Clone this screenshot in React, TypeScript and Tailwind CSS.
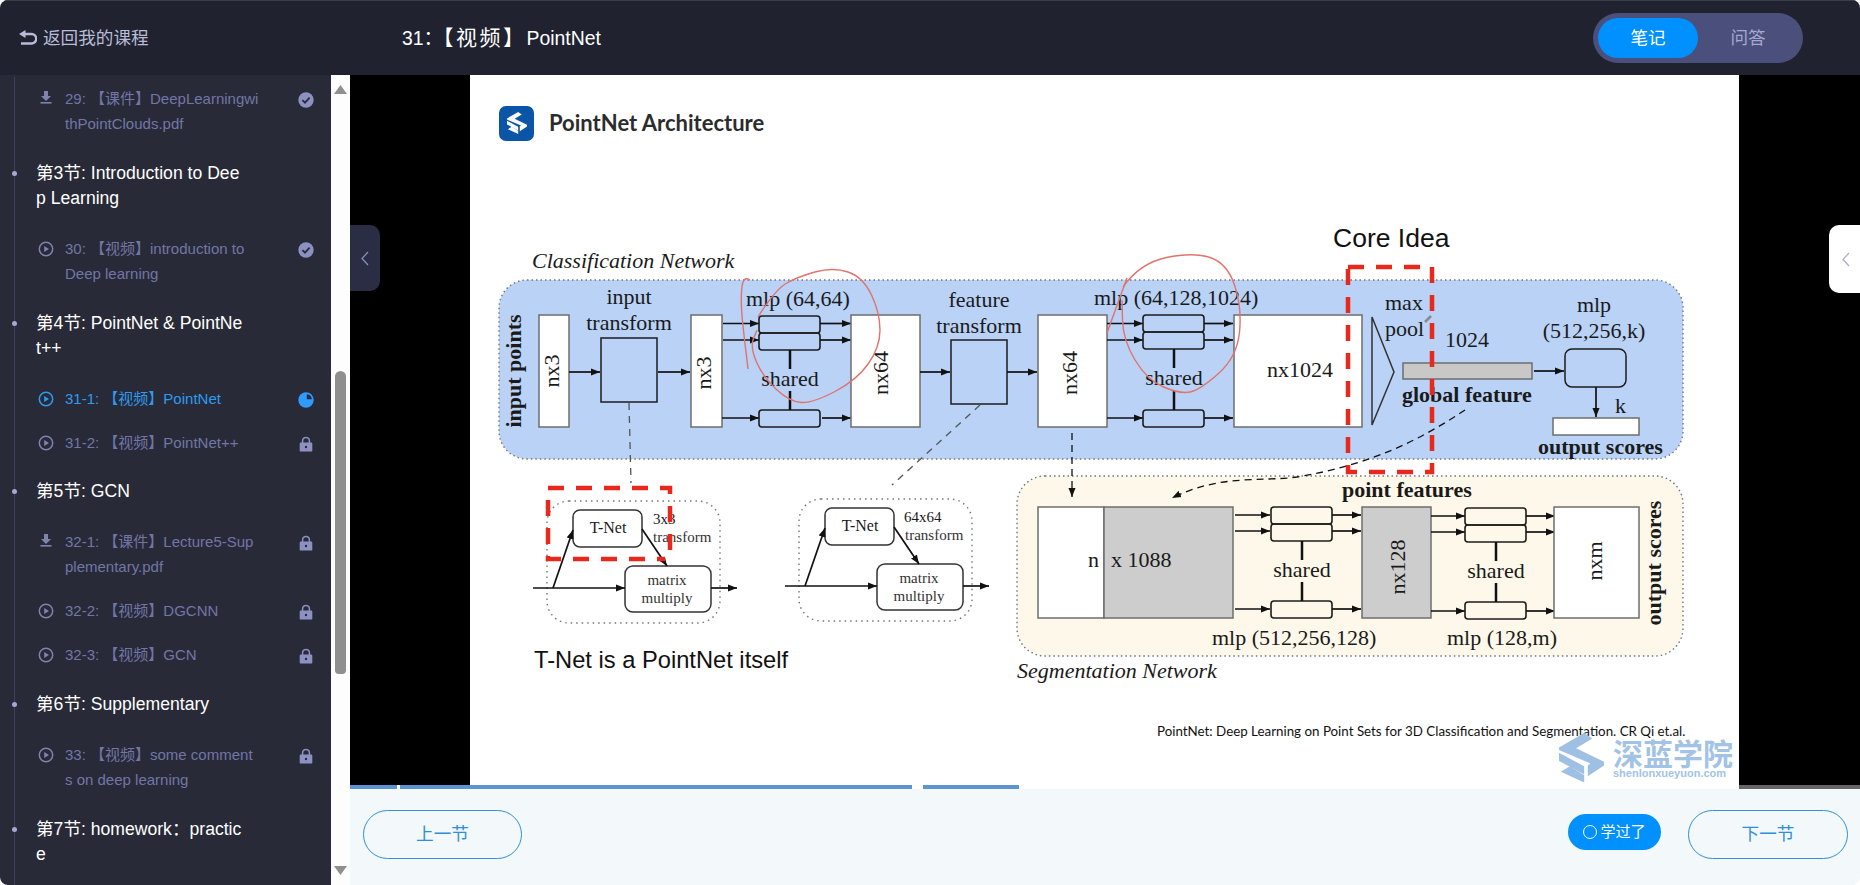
import type { ReactNode } from 'react'

const sans = "[font-family:'Liberation_Sans','Noto_Sans_CJK_SC',sans-serif]"

type Lesson = { kind: 'video' | 'file'; text: string; state: 'done' | 'lock' | 'active' }
type Section = { title?: string; lessons: Lesson[] }

const sections: Section[] = [
  { lessons: [{ kind: 'file', text: '29: 【课件】DeepLearningwithPointClouds.pdf', state: 'done' }] },
  { title: '第3节: Introduction to Deep Learning', lessons: [{ kind: 'video', text: '30: 【视频】introduction to\nDeep learning', state: 'done' }] },
  {
    title: '第4节: PointNet & PointNet++',
    lessons: [
      { kind: 'video', text: '31-1: 【视频】PointNet', state: 'active' },
      { kind: 'video', text: '31-2: 【视频】PointNet++', state: 'lock' },
    ],
  },
  {
    title: '第5节: GCN',
    lessons: [
      { kind: 'file', text: '32-1: 【课件】Lecture5-Supplementary.pdf', state: 'lock' },
      { kind: 'video', text: '32-2: 【视频】DGCNN', state: 'lock' },
      { kind: 'video', text: '32-3: 【视频】GCN', state: 'lock' },
    ],
  },
  { title: '第6节: Supplementary', lessons: [{ kind: 'video', text: '33: 【视频】some comments on deep learning', state: 'lock' }] },
  { title: '第7节: homework：practice', lessons: [] },
]

function KindIcon({ kind, active }: { kind: Lesson['kind']; active: boolean }) {
  const color = active ? '#2f9bef' : '#7f83ad'
  if (kind === 'file') {
    return (
      <svg width="16" height="16" viewBox="0 0 16 16" className="shrink-0 mt-[3px]">
        <path d="M6 2h4v5h3l-5 5-5-5h3z" fill={color} />
        <rect x="2.5" y="13" width="11" height="1.6" fill={color} />
      </svg>
    )
  }
  return (
    <svg width="16" height="16" viewBox="0 0 16 16" className="shrink-0 mt-[5px]">
      <circle cx="8" cy="8" r="6.7" fill="none" stroke={color} strokeWidth="1.5" />
      <path d="M6.2 4.9 11 8l-4.8 3.1z" fill={color} />
    </svg>
  )
}

function StateIcon({ state }: { state: Lesson['state'] }) {
  if (state === 'done') {
    return (
      <svg width="16" height="16" viewBox="0 0 16 16" className="shrink-0 mt-[6px]">
        <circle cx="8" cy="8" r="7.7" fill="#8d91c1" />
        <path d="M4.4 8.2 7 10.7l4.6-5" fill="none" stroke="#282a38" strokeWidth="1.8" />
      </svg>
    )
  }
  if (state === 'active') {
    return (
      <svg width="16" height="16" viewBox="0 0 16 16" className="shrink-0 mt-[6px]">
        <circle cx="8" cy="8" r="7.7" fill="#2f9bff" />
        <path d="M8.8 2.2a5.4 5.4 0 0 1 5 5h-5z" fill="#282a38" />
      </svg>
    )
  }
  return (
    <svg width="16" height="16" viewBox="0 0 16 16" className="shrink-0 mt-[6px]">
      <path d="M4.6 7V4.8a3.4 3.4 0 0 1 6.8 0V7" fill="none" stroke="#8d91c1" strokeWidth="1.5" />
      <rect x="1.7" y="6.6" width="12.6" height="9" rx="1.2" fill="#8d91c1" />
      <circle cx="8" cy="11" r="1.2" fill="#282a38" />
    </svg>
  )
}

function Sidebar() {
  return (
    <div className={`w-[331px] bg-[#282a38] overflow-hidden pt-[2px] ${sans}`}>
      <div className="ml-[14px] border-l border-[#3d4160] min-h-[810px]">
        {sections.map((s, i) => (
          <div key={i}>
            {s.title && (
              <div className="flex items-start pt-[15px] pb-[16px]">
                <span className="-ml-[3px] mt-[10px] w-[5px] h-[5px] rounded-full bg-[#a4a8d8] shrink-0" />
                <p className="ml-[19px] w-[207px] break-all text-[17.6px] leading-[25px] text-white">{s.title}</p>
              </div>
            )}
            {s.lessons.map(l => (
              <div key={l.text} className="flex items-start pt-[9px] pb-[9.85px] pl-[23px]">
                <KindIcon kind={l.kind} active={l.state === 'active'} />
                <p className={`ml-[11px] w-[195px] break-all whitespace-pre-line text-[15px] leading-[25px] ${l.state === 'active' ? 'text-[#2f9bef]' : 'text-[#7276a6]'}`}>{l.text}</p>
                <span className="ml-[38px]"><StateIcon state={l.state} /></span>
              </div>
            ))}
          </div>
        ))}
      </div>
    </div>
  )
}

function Scrollbar() {
  return (
    <div className="w-[19px] bg-[#fdfdfd] flex flex-col items-center">
      <svg width="13" height="10" viewBox="0 0 13 10" className="mt-[10px] shrink-0">
        <path d="M6.5 0 13 9H0z" fill="#8f8f8f" />
      </svg>
      <div className="mt-[276px] w-[11px] h-[303px] rounded-t-[6px] rounded-b-[4px] bg-[#8f8f8f] shrink-0" />
      <svg width="13" height="10" viewBox="0 0 13 10" className="mt-[192px] shrink-0">
        <path d="M0 0h13L6.5 9z" fill="#8f8f8f" />
      </svg>
    </div>
  )
}

const serif = "font-['Liberation_Serif',serif]"

function T(props: { x: number; y: number; size?: number; bold?: boolean; italic?: boolean; anchor?: 'start' | 'middle'; rotate?: boolean; children: ReactNode; className?: string; fill?: string }) {
  const { x, y, size = 22, bold, italic, anchor = 'start', rotate, children, className = serif, fill = '#1a1a1a' } = props
  return (
    <text
      x={x}
      y={y}
      fontSize={size}
      fontWeight={bold ? 700 : 400}
      fontStyle={italic ? 'italic' : 'normal'}
      textAnchor={anchor}
      fill={fill}
      className={className}
      transform={rotate ? `rotate(-90 ${x} ${y})` : undefined}
    >
      {children}
    </text>
  )
}

function Arrow({ x1, y1, x2, y2 }: { x1: number; y1: number; x2: number; y2: number }) {
  return <line x1={x1} y1={y1} x2={x2} y2={y2} stroke="#111" strokeWidth="1.7" markerEnd="url(#tip)" />
}

function smooth(p: number[][]) {
  let d = `M${p[0][0]} ${p[0][1]}`
  for (let i = 1; i < p.length - 1; i++) {
    const mx = (p[i][0] + p[i + 1][0]) / 2
    const my = (p[i][1] + p[i + 1][1]) / 2
    d += ` Q${p[i][0]} ${p[i][1]} ${mx} ${my}`
  }
  const last = p[p.length - 1]
  return `${d} L${last[0]} ${last[1]}`
}

// three stacked mlp boxes with the "shared" label between them
function Mlp({ x, top, bottom }: { x: number; top: number; bottom: number }) {
  const box = { x, width: 61, rx: 3, fill: 'none', stroke: '#1c1c1c', strokeWidth: 1.6 }
  const mid = x + 31
  return (
    <g>
      <rect {...box} y={top} height={17} />
      <rect {...box} y={top + 17} height={17} />
      <rect {...box} y={bottom} height={17} />
      <line x1={mid} y1={top + 34} x2={mid} y2={top + 53} stroke="#111" strokeWidth="2.5" />
      <line x1={mid} y1={bottom - 19} x2={mid} y2={bottom} stroke="#111" strokeWidth="2.5" />
      <T x={mid} y={top + 70} anchor="middle">shared</T>
    </g>
  )
}

function Block({ x, y, w, h, fill = '#fff' }: { x: number; y: number; w: number; h: number; fill?: string }) {
  return <rect x={x} y={y} width={w} height={h} fill={fill} stroke="#6e6e6e" strokeWidth="1.5" />
}

function TNet({ dx, dy, second }: { dx: number; dy: number; second?: boolean }) {
  return (
    <g transform={`translate(${dx} ${dy})`}>
      <rect x="547" y="501" width="173" height="122" rx="22" fill="none" stroke="#777" strokeWidth="1.4" strokeDasharray="1.5 4" />
      <rect x="573" y="510" width="69" height="37" rx="7" fill="#fff" stroke="#333" strokeWidth="1.5" />
      <T x={608} y={533} size={16} anchor="middle">T-Net</T>
      <T x={second ? 652 : 653} y={524} size={15}>{second ? '64x64' : '3x3'}</T>
      <T x={653} y={542} size={15} fill="#333">transform</T>
      <rect x="625" y="566" width="86" height="46" rx="8" fill="#fff" stroke="#333" strokeWidth="1.5" />
      <T x={667} y={585} size={15} anchor="middle" fill="#333">matrix</T>
      <T x={667} y={603} size={15} anchor="middle" fill="#333">multiply</T>
      <Arrow x1={533} y1={588} x2={625} y2={588} />
      <Arrow x1={711} y1={588} x2={737} y2={588} />
      <Arrow x1={553} y1={588} x2={573} y2={530} />
      <Arrow x1={642} y1={529} x2={667} y2={566} />
    </g>
  )
}

function LogoMark({ fill }: { fill: string }) {
  return (
    <g fill={fill}>
      <path d="M0 32 56 0l18 12-36 22 62 30v8L64 96V72l6-4L0 38Z" />
      <path d="M0 44 56 74v18L0 62Z" />
      <path d="M4 86 24 74l32 20v16Z" />
    </g>
  )
}

function Diagram() {
  const red = { fill: 'none', stroke: '#e8281c', strokeWidth: 4.5, strokeDasharray: '16 12' }
  const pen = { fill: 'none', stroke: '#e0736c', strokeWidth: 1.4 }
  return (
    <svg width="1269" height="710" viewBox="470 75 1269 710" className="block">
      <defs>
        <marker id="tip" markerUnits="userSpaceOnUse" markerWidth="10" markerHeight="8" refX="9" refY="4" orient="auto">
          <path d="M0 0.5 9 4 0 7.5z" fill="#111" />
        </marker>
      </defs>

      {/* title */}
      <g transform="translate(499 106)">
        <rect width="35" height="35" rx="7" fill="#0b55a6" />
        <g transform="translate(8 6) scale(0.2)"><LogoMark fill="#fff" /></g>
      </g>
      <T x={549} y={131} size={22} bold className="font-['Lato',sans-serif]" fill="#2c2c2c">PointNet Architecture</T>

      {/* classification */}
      <T x={532} y={268} italic>Classification Network</T>
      <rect x="499" y="280" width="1184" height="179" rx="28" fill="#b9d2f6" stroke="#6f7680" strokeWidth="1.4" strokeDasharray="1.5 3" />
      <T x={521} y={371} bold rotate anchor="middle">input points</T>
      <Block x={539} y={315} w={30} h={112} />
      <T x={559} y={371} rotate anchor="middle">nx3</T>
      <Arrow x1={569} y1={372} x2={600} y2={372} />
      <rect x="601" y="338" width="56" height="64" fill="none" stroke="#1c1c1c" strokeWidth="1.5" />
      <T x={629} y={304} anchor="middle">input</T>
      <T x={629} y={330} anchor="middle">transform</T>
      <Arrow x1={658} y1={372} x2={690} y2={372} />
      <Block x={691} y={315} w={31} h={112} />
      <T x={711} y={373} rotate anchor="middle">nx3</T>
      <T x={746} y={306}>mlp (64,64)</T>
      <Arrow x1={723} y1={323.5} x2={759} y2={323.5} />
      <Arrow x1={723} y1={340} x2={759} y2={340} />
      <Arrow x1={722} y1={418} x2={759} y2={418} />
      <Mlp x={759} top={316} bottom={410} />
      <Arrow x1={820} y1={323.5} x2={851} y2={323.5} />
      <Arrow x1={820} y1={340} x2={851} y2={340} />
      <Arrow x1={822} y1={418} x2={851} y2={418} />
      <Block x={851} y={315} w={69} h={112} />
      <T x={888} y={373} rotate anchor="middle">nx64</T>
      <Arrow x1={920} y1={372} x2={950} y2={372} />
      <rect x="951" y="340" width="56" height="64" fill="none" stroke="#1c1c1c" strokeWidth="1.5" />
      <T x={979} y={307} anchor="middle">feature</T>
      <T x={979} y={333} anchor="middle">transform</T>
      <Arrow x1={1007} y1={372} x2={1037} y2={372} />
      <Block x={1038} y={315} w={69} h={112} />
      <T x={1077} y={373} rotate anchor="middle">nx64</T>
      <T x={1094} y={305}>mlp (64,128,1024)</T>
      <Arrow x1={1107} y1={323.5} x2={1143} y2={323.5} />
      <Arrow x1={1107} y1={340} x2={1143} y2={340} />
      <Arrow x1={1107} y1={418} x2={1143} y2={418} />
      <Mlp x={1143} top={315} bottom={410} />
      <Arrow x1={1204} y1={323.5} x2={1233} y2={323.5} />
      <Arrow x1={1204} y1={340} x2={1233} y2={340} />
      <Arrow x1={1204} y1={418} x2={1233} y2={418} />
      <Block x={1234} y={315} w={128} h={112} />
      <T x={1267} y={377}>nx1024</T>
      <path d="M1372 317 1394 372 1372 425Z" fill="none" stroke="#333" strokeWidth="1.5" />
      <T x={1385} y={310}>max</T>
      <T x={1385} y={336}>pool</T>
      <T x={1445} y={347}>1024</T>
      <Block x={1403} y={363} w={129} h={16} fill="#c8c8c8" />
      <T x={1402} y={402} bold>global feature</T>
      <Arrow x1={1534} y1={371} x2={1564} y2={371} />
      <rect x="1565" y="349" width="61" height="38" rx="7" fill="none" stroke="#1c1c1c" strokeWidth="1.5" />
      <T x={1594} y={312} anchor="middle">mlp</T>
      <T x={1594} y={338} anchor="middle">(512,256,k)</T>
      <Arrow x1={1596} y1={387} x2={1596} y2={417} />
      <T x={1615} y={413}>k</T>
      <Block x={1553} y={418} w={86} h={17} />
      <T x={1538} y={454} bold>output scores</T>

      {/* segmentation */}
      <rect x="1017" y="476" width="666" height="180" rx="28" fill="#fdf8e9" stroke="#6f7680" strokeWidth="1.4" strokeDasharray="1.5 3" />
      <T x={1017} y={678} italic>Segmentation Network</T>
      <T x={1342} y={497} bold>point features</T>
      <Block x={1038} y={507} w={66} h={111} />
      <Block x={1104} y={507} w={129} h={111} fill="#cdcdcd" />
      <T x={1088} y={567} size={22}>n</T>
      <T x={1111} y={567} size={22}>x 1088</T>
      <Arrow x1={1235} y1={515} x2={1270} y2={515} />
      <Arrow x1={1235} y1={531} x2={1270} y2={531} />
      <Arrow x1={1235} y1={609} x2={1270} y2={609} />
      <Mlp x={1271} top={507} bottom={601} />
      <Arrow x1={1332} y1={515} x2={1361} y2={515} />
      <Arrow x1={1332} y1={531} x2={1361} y2={531} />
      <Arrow x1={1332} y1={609} x2={1361} y2={609} />
      <Block x={1362} y={507} w={69} h={111} fill="#cdcdcd" />
      <T x={1405} y={567} rotate anchor="middle">nx128</T>
      <Arrow x1={1431} y1={516} x2={1465} y2={516} />
      <Arrow x1={1431} y1={532} x2={1465} y2={532} />
      <Arrow x1={1431} y1={611} x2={1465} y2={611} />
      <Mlp x={1465} top={508} bottom={602} />
      <Arrow x1={1526} y1={516} x2={1555} y2={516} />
      <Arrow x1={1526} y1={532} x2={1555} y2={532} />
      <Arrow x1={1526} y1={611} x2={1555} y2={611} />
      <Block x={1554} y={507} w={85} h={111} />
      <T x={1602} y={561} rotate anchor="middle">nxm</T>
      <T x={1661} y={563} bold rotate anchor="middle">output scores</T>
      <T x={1212} y={645}>mlp (512,256,128)</T>
      <T x={1447} y={645}>mlp (128,m)</T>

      {/* dashed links */}
      <line x1="629" y1="403" x2="631" y2="483" stroke="#555" strokeWidth="1.3" strokeDasharray="7 6" />
      <line x1="980" y1="405" x2="892" y2="485" stroke="#555" strokeWidth="1.3" strokeDasharray="7 6" />
      <line x1="1072" y1="433" x2="1072" y2="497" stroke="#111" strokeWidth="1.3" strokeDasharray="7 5" markerEnd="url(#tip)" />
      <path d="M1465 410C1420 440 1370 465 1297 477 1260 482 1220 474 1172 498" fill="none" stroke="#111" strokeWidth="1.3" strokeDasharray="7 5" markerEnd="url(#tip)" />

      {/* t-net */}
      <TNet dx={0} dy={0} />
      <TNet dx={252} dy={-2} second />
      <T x={534} y={668} size={23.7} className="font-['Liberation_Sans',sans-serif]" fill="#111">T-Net is a PointNet itself</T>

      {/* annotations */}
      <T x={1333} y={247} size={26.5} className="font-['Liberation_Sans',sans-serif]" fill="#111">Core Idea</T>
      <rect x="1348" y="267" width="84" height="205" {...red} />
      <path d="M670 550V488H548V559H665" {...red} />
      <path d="M748 369C745 340 738 300 743 282 745 277 748 279 750 280" {...pen} />
      <path d={smooth([[758, 317], [775, 290], [797, 277], [833, 267], [863, 277], [880, 313], [880, 347], [857, 380], [813, 403], [790, 402], [763, 377], [750, 347], [757, 330]])} {...pen} />
      <path d="M1127 278 1107 333" {...pen} />
      <path d={smooth([[1123, 287], [1140, 263], [1193, 252], [1227, 263], [1242, 307], [1237, 357], [1200, 390], [1180, 394], [1147, 380], [1123, 340], [1122, 300]])} {...pen} />
      <path d="M1425 322 1431 316" stroke="#8a8a8a" strokeWidth="2.5" />

      {/* footnote, watermark */}
      <T x={1157} y={736} size={13.35} className="font-['Lato',sans-serif]" fill="#111">PointNet: Deep Learning on Point Sets for 3D Classification and Segmentation. CR Qi et.al.</T>
      <g transform="translate(1559 733) scale(0.45)"><LogoMark fill="#9dc0e4" /></g>
      <text x="1613" y="765" fontSize="30" fontWeight="700" fill="#a3c3e6" className="font-['Noto_Sans_CJK_SC',sans-serif]">深蓝学院</text>
      <text x="1613" y="777" fontSize="11" fontWeight="700" fill="#a3c3e6" className="font-['Liberation_Sans',sans-serif]">shenlonxueyuon.com</text>
    </svg>
  )
}

export default function App() {
  return (
    <div className={`w-[1860px] h-[885px] rounded-lg overflow-hidden flex flex-col bg-white ${sans}`}>
      <header className="h-[75px] shrink-0 bg-[#20232f] border-t border-[#3a3d4a] flex items-center">
        <div className="w-[402px] pl-[19px] flex items-center text-[17.6px] text-[#b8bcd6]">
          <svg width="18" height="15" viewBox="0 0 18 15" className="mr-[6px]">
            <path d="M0 4 6.5 0v8z" fill="#b8bcd6" />
            <path d="M5 4h7.5a4.5 4.5 0 0 1 0 9.5H2" fill="none" stroke="#b8bcd6" strokeWidth="2.4" />
          </svg>
          返回我的课程
        </div>
        <h1 className="text-[19.4px] text-white">31：<span className="text-[21px] tracking-[2.5px]">【视频】</span>PointNet</h1>
        <div className="ml-auto mr-[57px] w-[210px] h-[50px] p-[5px] rounded-full bg-[#4b4f7c] flex items-center text-[17.6px]">
          <span className="w-[100px] h-[40px] rounded-full bg-[#0091ff] text-white flex items-center justify-center">笔记</span>
          <span className="w-[100px] text-[#a5a9cf] text-center">问答</span>
        </div>
      </header>
      <div className="flex flex-1 min-h-0">
        <Sidebar />
        <Scrollbar />
        <main className="flex-1 flex flex-col">
          <div className="relative h-[714px] bg-black flex shrink-0">
            <div className="ml-[120px] w-[1269px] bg-white">
              <Diagram />
            </div>
            <div className="absolute left-0 top-[150px] w-[30px] h-[66px] rounded-r-[10px] bg-[#2a2d43] flex items-center justify-center">
              <svg width="8" height="15" viewBox="0 0 8 15"><path d="M7 1 1 7.5 7 14" fill="none" stroke="#8b90c0" strokeWidth="1.2" /></svg>
            </div>
            <div className="absolute right-0 top-[150px] w-[31px] h-[68px] rounded-l-[10px] bg-white flex items-center justify-center">
              <svg width="8" height="15" viewBox="0 0 8 15" className="ml-[3px]"><path d="M7 1 1 7.5 7 14" fill="none" stroke="#a9abd8" strokeWidth="1.2" /></svg>
            </div>
            <div className="absolute left-0 right-0 bottom-0 h-1 bg-white/40 flex">
              <div className="w-[47px] bg-[#5b93d3]" />
              <div className="w-[3px] bg-white" />
              <div className="w-[512px] bg-[#5b93d3]" />
              <div className="w-[11px] bg-white" />
              <div className="w-[96px] bg-[#5b93d3]" />
            </div>
          </div>
          <div className="flex-1 bg-[#f3f8fb] flex items-start pt-[21px] pl-[13px] pr-[12px]">
            <button className="w-[159px] h-[49px] rounded-full border border-[#2f8fd8] text-[#2f8fd8] text-[17.6px]">上一节</button>
            <button className="ml-auto mt-[4px] w-[93px] h-[36px] rounded-full bg-[#0091ff] text-white text-[15px] flex items-center justify-center gap-[3px]">
              <span className="w-[14px] h-[14px] rounded-full border border-white" />
              学过了
            </button>
            <button className="ml-[27px] w-[160px] h-[49px] rounded-full border border-[#2f8fd8] text-[#2f8fd8] text-[17.6px]">下一节</button>
          </div>
        </main>
      </div>
    </div>
  )
}
